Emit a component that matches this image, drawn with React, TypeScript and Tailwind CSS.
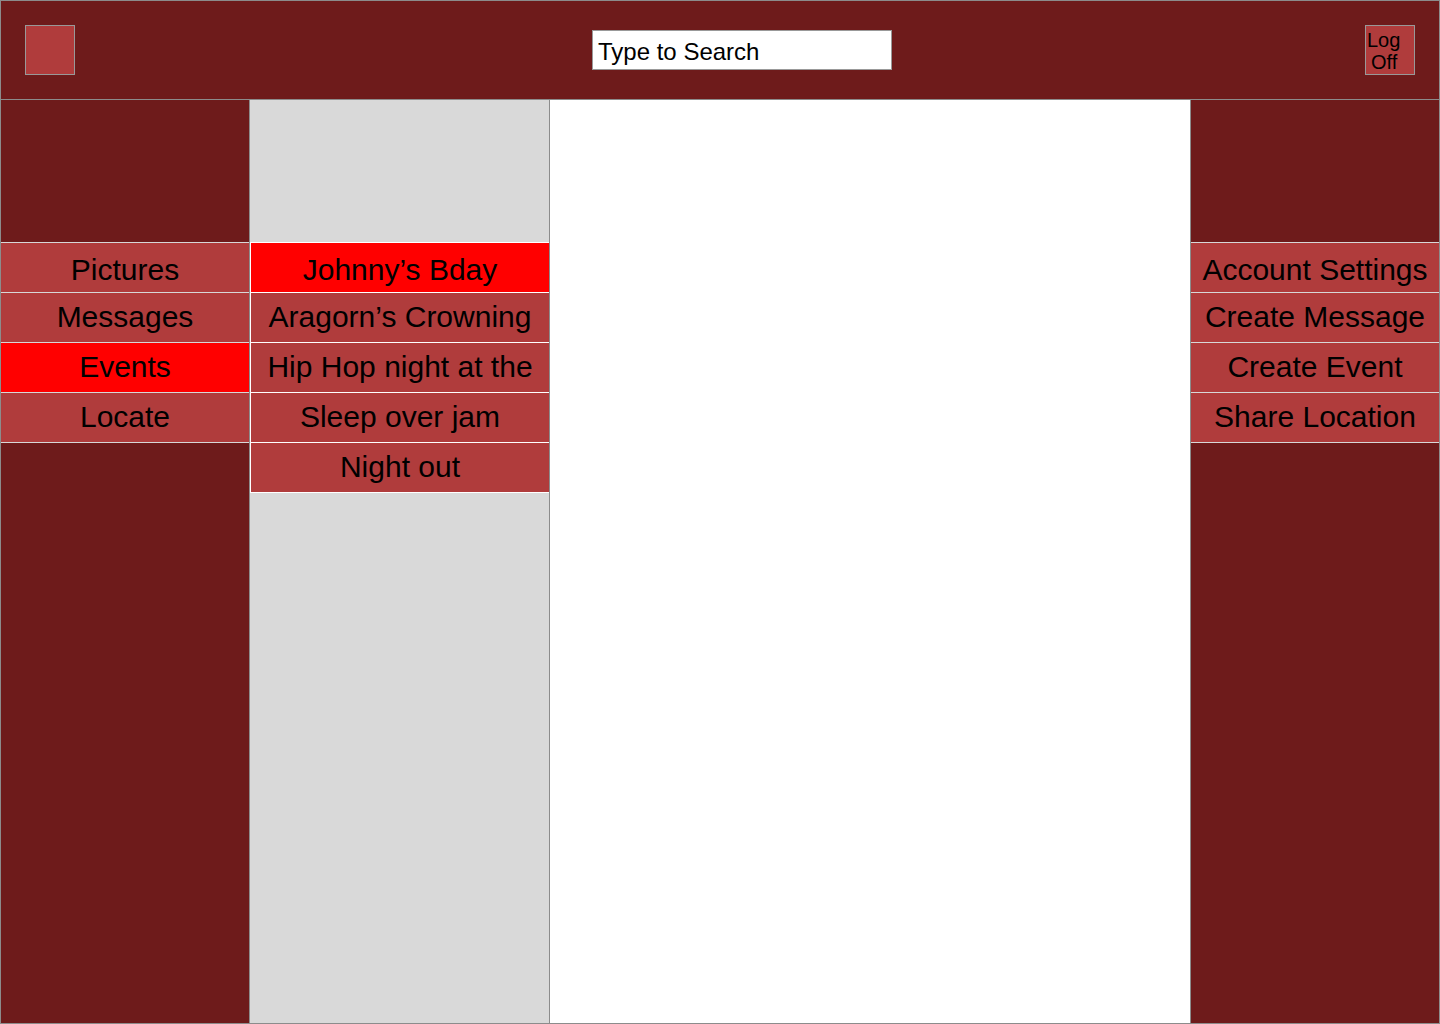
const leftNav = [
  { label: "Pictures", active: false },
  { label: "Messages", active: false },
  { label: "Events", active: true },
  { label: "Locate", active: false },
];

const events = [
  { label: "Johnny’s Bday", active: true },
  { label: "Aragorn’s Crowning", active: false },
  { label: "Hip Hop night at the", active: false },
  { label: "Sleep over jam", active: false },
  { label: "Night out", active: false },
];

const actions = ["Account Settings", "Create Message", "Create Event", "Share Location"];

function Row({ label, active, light }: { label: string; active?: boolean; light?: boolean }) {
  return (
    <div
      className={
        "flex h-[50px] items-center justify-center overflow-hidden whitespace-nowrap border-t pb-[3px] text-[30px] text-black first:pt-[4px] first:pb-0 " +
        (light ? "border-white " : "border-[#d8d8d8] ") +
        (active ? "bg-[#ff0000]" : "bg-[#b03c3c]")
      }
    >
      {label}
    </div>
  );
}

export default function App() {
  return (
    <div
      className="flex h-[1024px] w-[1440px] flex-col border border-[#8c8c8c] bg-white"
      style={{ fontFamily: '"Liberation Sans", Arial, sans-serif' }}
    >
      <header className="flex h-[99px] shrink-0 items-start border-b border-[#8c8c8c] bg-[#6e1b1b] px-6 pt-6">
        <div className="h-[50px] w-[50px] border border-[#999] bg-[#b03c3c]" />
        <div className="flex flex-1 justify-center pt-[5px] pl-[44px]">
          <div className="flex h-[40px] w-[300px] items-center border border-[#999] bg-white px-[5px] pt-[3px] text-[24px] text-black">
            Type to Search
          </div>
        </div>
        <button className="flex h-[50px] w-[50px] flex-col items-start justify-center border border-[#999] bg-[#b03c3c] pt-[2px] text-left text-[20px] leading-[22px] text-black">
          <span className="pl-[1px]">Log</span>
          <span className="pl-[5px]">Off</span>
        </button>
      </header>

      <div className="flex flex-1">
        <aside className="w-[249px] border-r border-[#8c8c8c] bg-[#6e1b1b]">
          <div className="h-[142px]" />
          <div className="border-b border-[#d8d8d8]">
            {leftNav.map((item) => (
              <Row key={item.label} label={item.label} active={item.active} />
            ))}
          </div>
        </aside>

        <section className="w-[300px] border-r border-[#8c8c8c] bg-[#d9d9d9]">
          <div className="h-[142px]" />
          <div className="border-b border-l border-white">
            {events.map((item) => (
              <Row key={item.label} label={item.label} active={item.active} light />
            ))}
          </div>
        </section>

        <main className="flex-1 bg-white" />

        <aside className="w-[249px] border-l border-[#8c8c8c] bg-[#6e1b1b]">
          <div className="h-[142px]" />
          <div className="border-b border-[#d8d8d8]">
            {actions.map((label) => (
              <Row key={label} label={label} />
            ))}
          </div>
        </aside>
      </div>
    </div>
  );
}
